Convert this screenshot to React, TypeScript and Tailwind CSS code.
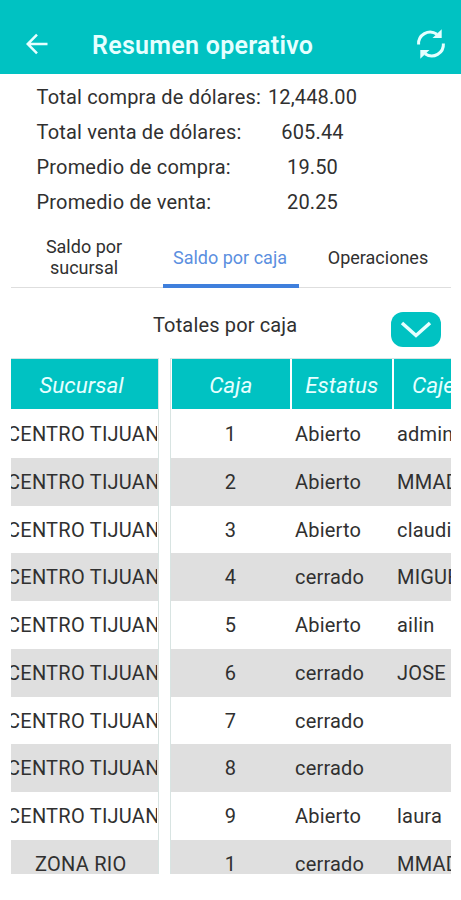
const totals = [
  { label: "Total compra de dólares:", value: "12,448.00" },
  { label: "Total venta de dólares:", value: "605.44" },
  { label: "Promedio de compra:", value: "19.50" },
  { label: "Promedio de venta:", value: "20.25" },
];

const rows = [
  { branch: "CENTRO TIJUANA", caja: "1", status: "Abierto", cashier: "admin" },
  { branch: "CENTRO TIJUANA", caja: "2", status: "Abierto", cashier: "MMADRID" },
  { branch: "CENTRO TIJUANA", caja: "3", status: "Abierto", cashier: "claudia" },
  { branch: "CENTRO TIJUANA", caja: "4", status: "cerrado", cashier: "MIGUEL" },
  { branch: "CENTRO TIJUANA", caja: "5", status: "Abierto", cashier: "ailin" },
  { branch: "CENTRO TIJUANA", caja: "6", status: "cerrado", cashier: "JOSE" },
  { branch: "CENTRO TIJUANA", caja: "7", status: "cerrado", cashier: "" },
  { branch: "CENTRO TIJUANA", caja: "8", status: "cerrado", cashier: "" },
  { branch: "CENTRO TIJUANA", caja: "9", status: "Abierto", cashier: "laura" },
  { branch: "ZONA RIO", caja: "1", status: "cerrado", cashier: "MMADRID" },
];

function Header() {
  return (
    <header className="flex h-[74px] items-center bg-[#00c2c2] pt-[14px] text-[#e6ffff]">
      <svg className="ml-[26px] h-[22px] w-[22px]" viewBox="0 0 22 22" fill="none" stroke="currentColor" strokeWidth="2.5">
        <path d="M21.5 11H2M11 1.7L1.7 11L11 20.3" />
      </svg>
      <h1 className="ml-[44px] pt-[3px] text-[25px] leading-[30px] font-semibold tracking-[0.28px] whitespace-nowrap">Resumen operativo</h1>
      <svg className="mr-[15px] ml-auto h-[32px] w-[30px]" viewBox="0 0 30 32" fill="none" stroke="currentColor" strokeWidth="3">
        <path d="M2.6 16.5C2 7 12.5 .5 21 6.2" />
        <path d="M27.4 15.5C28 25 17.5 31.5 9 25.8" />
        <path d="M25.7 1.2V10H16.5Z" fill="currentColor" stroke="none" />
        <path d="M4.3 30.8V22H13.5Z" fill="currentColor" stroke="none" />
      </svg>
    </header>
  );
}

function Totals() {
  return (
    <dl className="flex flex-col pt-[6px] pl-[36.5px] text-[20px]">
      {totals.map((t) => (
        <div key={t.label} className="flex h-[34.8px] items-center">
          <dt className="w-[225.5px] whitespace-nowrap tracking-[0.18px]">{t.label}</dt>
          <dd className="w-[101px] text-center tracking-[0.15px]">{t.value}</dd>
        </div>
      ))}
    </dl>
  );
}

function Tabs() {
  return (
    <nav className="mr-[10px] ml-[11px] mt-[8px] flex h-[61px] border-b border-[#dedede] text-center text-[18px] leading-[21px]">
      <button className="w-[152px] pr-[6px] pb-px">Saldo por<br />sucursal</button>
      <button className="-mb-px w-[136px] rounded-t-[2px] border-b-4 border-[#3f7fdc] pt-[3px] pr-[2px] text-[#5b8fe0]">Saldo por caja</button>
      <button className="flex-1 pl-[6px]">Operaciones</button>
    </nav>
  );
}

function BranchColumn() {
  return (
    <div className="w-[148px] overflow-hidden border-t border-r border-[#d8e4e2]">
      <div className="mb-px flex h-[50px] items-center justify-center bg-[#00c2c2] pt-[3px] pr-[6px] text-[22.5px] text-[#e6ffff] italic">Sucursal</div>
      {rows.map((r, i) => (
        <div key={i} className="-mr-px flex h-[47.75px] items-center pr-[2px] whitespace-nowrap even:bg-white odd:bg-[#dfdfdf]">
          <div className="w-full overflow-hidden tracking-[0.25px]">
            <span className={r.branch === "ZONA RIO" ? "ml-[24px]" : "-ml-[4px]"}>{r.branch}</span>
          </div>
        </div>
      ))}
    </div>
  );
}

function DetailTable() {
  return (
    <div className="w-[281px] overflow-hidden border-t border-l border-[#d8e4e2]">
      <div className="mb-px flex h-[50px] w-[400px] gap-[2px] pl-px text-[22.5px] text-[#e6ffff] italic">
        <div className="flex w-[117.5px] items-center justify-center bg-[#00c2c2] pt-[3px]">Caja</div>
        <div className="flex w-[100.5px] items-center justify-center bg-[#00c2c2] pt-[3px]">Estatus</div>
        <div className="flex w-[150px] items-center bg-[#00c2c2] pt-[3px] pl-[18px]">Cajero</div>
      </div>
      {rows.map((r, i) => (
        <div key={i} className="-ml-px flex h-[47.75px] w-[400px] items-center tracking-[0.2px] whitespace-nowrap even:bg-white odd:bg-[#dfdfdf]">
          <span className="w-[121px] text-center">{r.caja}</span>
          <span className="w-[102px] pl-[4px]">{r.status}</span>
          <span className="pl-[4px]">{r.cashier}</span>
        </div>
      ))}
    </div>
  );
}

export default function App() {
  return (
    <main className="flex h-[900px] w-[461px] flex-col overflow-hidden bg-white font-['Roboto',sans-serif] text-[#303030]">
      <Header />
      <Totals />
      <Tabs />
      <section className="flex h-[71px] items-center pl-[153px]">
        <h2 className="pt-[2px] text-[20px] tracking-[0.15px]">Totales por caja</h2>
        <button className="mt-[12px] mr-[20px] ml-auto flex h-[35px] w-[50px] items-center justify-center rounded-[12px] bg-[#00c2c2]">
          <svg className="h-[18px] w-[32px]" viewBox="0 0 32 18" fill="none" stroke="#e6ffff" strokeWidth="3.5">
            <path d="M2 2L16 14.5L30 2" />
          </svg>
        </button>
      </section>
      <section className="-mt-px mr-[10px] ml-[11px] flex h-[516px] justify-between overflow-hidden text-[20px]">
        <BranchColumn />
        <DetailTable />
      </section>
    </main>
  );
}
